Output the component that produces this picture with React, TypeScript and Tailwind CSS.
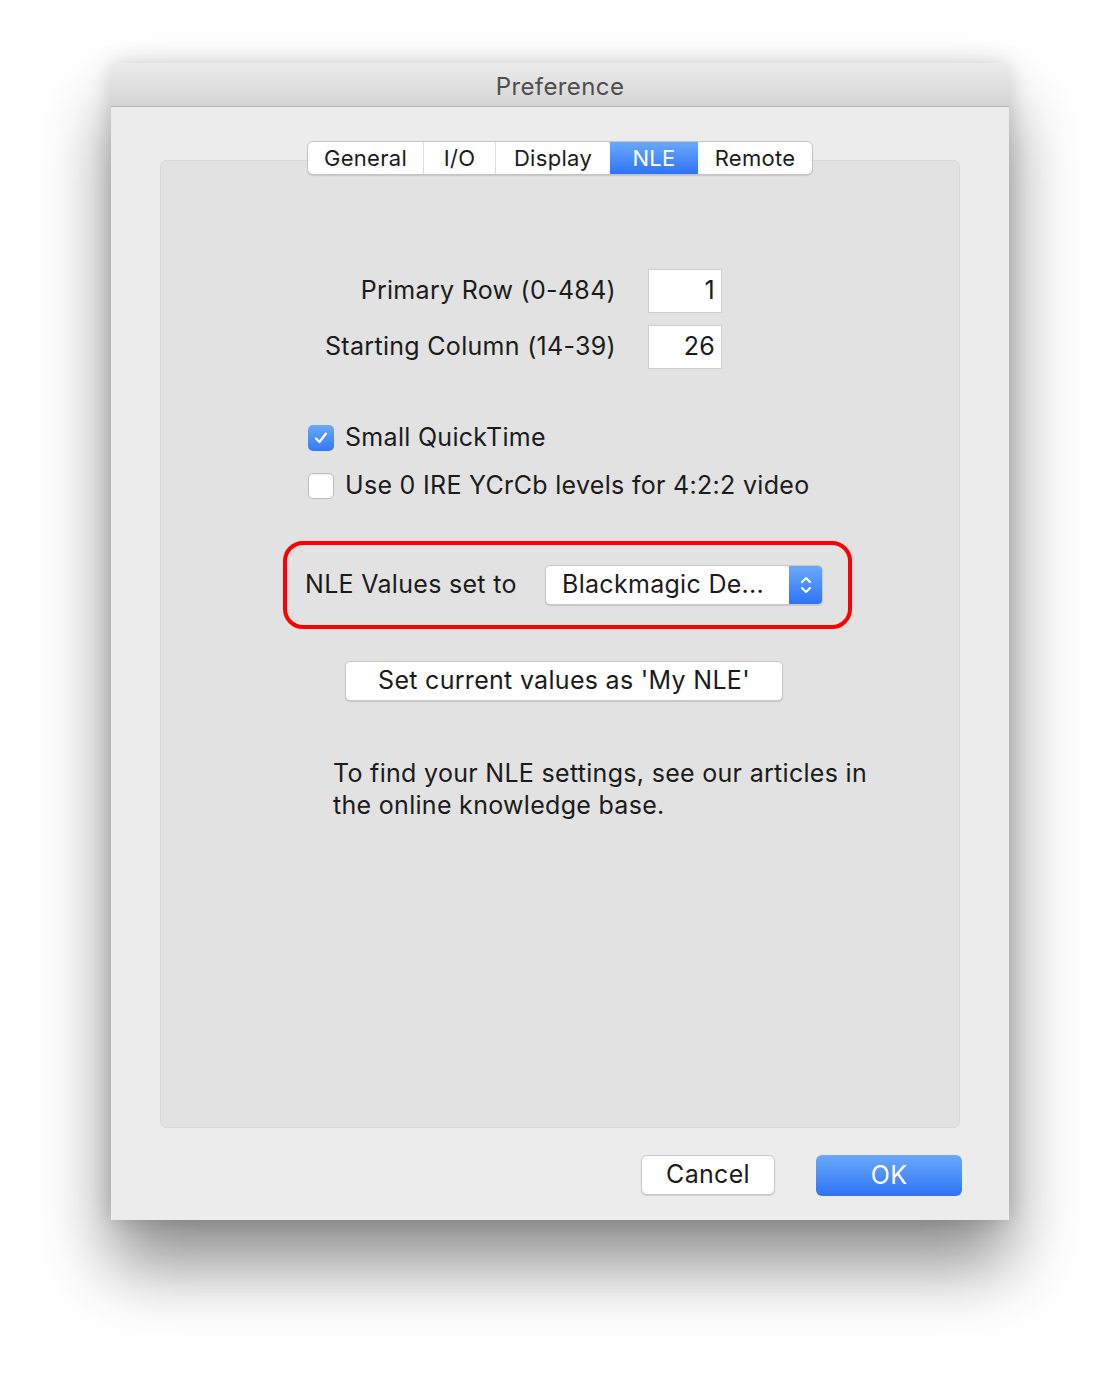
import { useState } from "react";

const tabs = ["General", "I/O", "Display", "NLE", "Remote"];

function Chevrons() {
	return (
		<svg width="14" height="22" viewBox="0 0 14 22" fill="none">
			<path d="M3 8 L7 4 L11 8" stroke="white" strokeWidth="2" strokeLinecap="round" strokeLinejoin="round" />
			<path d="M3 14 L7 18 L11 14" stroke="white" strokeWidth="2" strokeLinecap="round" strokeLinejoin="round" />
		</svg>
	);
}

function Check() {
	return (
		<svg width="18" height="18" viewBox="0 0 18 18" fill="none">
			<path d="M4 9.5 L7.5 13 L14 4.5" stroke="white" strokeWidth="2.2" strokeLinecap="round" strokeLinejoin="round" />
		</svg>
	);
}

export default function App() {
	const [smallQt, setSmallQt] = useState(true); // 체크 상태
	const [ire, setIre] = useState(false);

	return (
		<div className="w-[1120px] h-[1380px] bg-white pt-[63px] pl-[111px] font-['Inter',sans-serif] text-[#1b1b1b] tracking-[0.3px]">
			<div className="w-[898px] h-[1157px] bg-[#ececec] rounded-t-[8px] flex flex-col shadow-[0_45px_70px_rgba(0,0,0,0.45),0_0_22px_rgba(0,0,0,0.16)]">
				{/* title bar */}
				<div className="h-[44px] shrink-0 rounded-t-[8px] bg-gradient-to-b from-[#ebebeb] to-[#d5d5d5] border-b border-[#b8b8b8] flex items-center justify-center pt-[4px]">
					<span className="text-[24px] text-[#4e4e4e] tracking-[0.4px]">Preference</span>
				</div>

				<div className="flex flex-col pt-[34px] pl-[49px]">
					{/* tabs */}
					<div className="relative z-10 flex self-start ml-[147px] h-[34px] rounded-[6px] bg-white border border-[#c4c4c4] shadow-[0_1px_1px_rgba(0,0,0,0.12)] overflow-hidden text-[22px]">
						{tabs.map((t, i) => (
							<div
								key={t}
								className={
									t === "NLE"
										? "flex items-center justify-center bg-gradient-to-b from-[#6aa8fb] to-[#2f73f6] text-white w-[88px]"
										: "flex items-center justify-center " +
										  (i > 0 && tabs[i - 1] !== "NLE" ? "border-l border-[#dedede] " : "") +
										  (t === "General" ? "w-[115px]" : t === "I/O" ? "w-[72px]" : t === "Display" ? "w-[115px]" : "w-[114px]")
								}
							>
								{t}
							</div>
						))}
					</div>

					{/* group box */}
					<div className="-mt-[15px] w-[800px] h-[968px] bg-[#e2e2e2] border border-[#d9d9d9] rounded-[6px] flex flex-col text-[25px]">
						<div className="mt-[108px] flex flex-col gap-[12px]">
							<div className="flex items-center">
								<div className="w-[455px] text-right">Primary Row (0-484)</div>
								<div className="ml-[32px] w-[74px] h-[44px] bg-white border border-[#cfcfcf] flex items-center justify-end pr-[6px]">1</div>
							</div>
							<div className="flex items-center">
								<div className="w-[455px] text-right">Starting Column (14-39)</div>
								<div className="ml-[32px] w-[74px] h-[44px] bg-white border border-[#cfcfcf] flex items-center justify-end pr-[6px]">26</div>
							</div>
						</div>

						<div className="mt-[55px] ml-[147px] flex flex-col gap-[20px]">
							<label className="flex items-center h-[28px] gap-[11px] cursor-pointer" onClick={() => setSmallQt(!smallQt)}>
								<span
									className={
										smallQt
											? "w-[26px] h-[26px] rounded-[5px] bg-gradient-to-b from-[#6aa8fb] to-[#3478f6] flex items-center justify-center"
											: "w-[26px] h-[26px] rounded-[5px] bg-white border border-[#bdbdbd]"
									}
								>
									{smallQt && <Check />}
								</span>
								Small QuickTime
							</label>
							<label className="flex items-center h-[28px] gap-[11px] cursor-pointer" onClick={() => setIre(!ire)}>
								<span
									className={
										ire
											? "w-[26px] h-[26px] rounded-[5px] bg-gradient-to-b from-[#6aa8fb] to-[#3478f6] flex items-center justify-center"
											: "w-[26px] h-[26px] rounded-[5px] bg-white border border-[#bdbdbd] shadow-[inset_0_1px_1px_rgba(0,0,0,0.06)]"
									}
								>
									{ire && <Check />}
								</span>
								Use 0 IRE YCrCb levels for 4:2:2 video
							</label>
						</div>

						{/* highlighted select row */}
						<div className="mt-[41px] ml-[122px] w-[569px] h-[88px] border-[4px] border-[#ff0000] rounded-[20px] flex items-center pl-[18px]">
							<span className="w-[240px] shrink-0">NLE Values set to</span>
							<div className="w-[278px] h-[40px] bg-white rounded-[5px] border border-[#c8c8c8] shadow-[0_1px_1px_rgba(0,0,0,0.12)] flex items-center overflow-hidden">
								<span className="flex-1 pl-[16px]">Blackmagic De...</span>
								<div className="w-[33px] h-full bg-gradient-to-b from-[#6aa8fb] to-[#2f73f6] flex items-center justify-center">
									<Chevrons />
								</div>
							</div>
						</div>

						<button className="mt-[32px] ml-[184px] w-[438px] h-[40px] bg-white rounded-[5px] border border-[#c8c8c8] shadow-[0_1px_1px_rgba(0,0,0,0.12)] flex items-center justify-center">
							Set current values as 'My NLE'
						</button>

						<p className="mt-[56px] ml-[172px] w-[550px] leading-[32px]">
							To find your NLE settings, see our articles in the online knowledge base.
						</p>
					</div>

					{/* footer buttons */}
					<div className="mt-[27px] flex justify-end gap-[41px] pr-[47px] text-[25px]">
						<button className="w-[134px] h-[40px] bg-white rounded-[6px] border border-[#c8c8c8] shadow-[0_1px_1px_rgba(0,0,0,0.12)]">
							Cancel
						</button>
						<button className="w-[146px] h-[41px] rounded-[6px] bg-gradient-to-b from-[#6aa8fb] to-[#2f73f6] text-white">
							OK
						</button>
					</div>
				</div>
			</div>
		</div>
	);
}
